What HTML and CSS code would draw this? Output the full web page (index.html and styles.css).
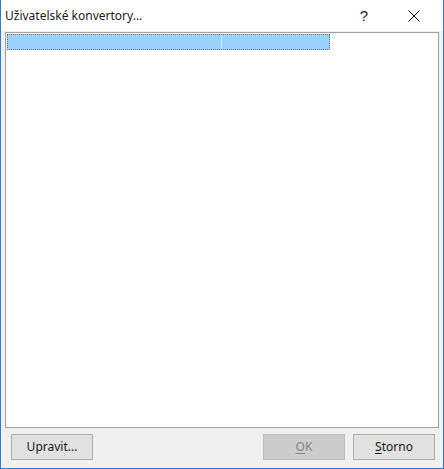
FILE: index.html
```html
<!DOCTYPE html>
<html>
<head>
<meta charset="utf-8">
<link rel="stylesheet" href="styles.css">
</head>
<body>
<div class="window">
  <div class="titlebar">
    <div class="title">Uživatelské konvertory...</div>
    <div class="tb-btn help">?</div>
    <div class="tb-btn close">
      <svg width="12" height="12" viewBox="0 0 12 12"><path d="M0.5 0.5 L11.5 11.5 M11.5 0.5 L0.5 11.5" stroke="#000" stroke-width="1" fill="none"/></svg>
    </div>
  </div>
  <div class="content">
    <div class="listbox">
      <div class="row">
        <div class="cell c1"></div>
        <div class="cell c2"></div>
      </div>
    </div>
    <div class="buttons">
      <button class="btn">Upravit...</button>
      <div class="spacer"></div>
      <button class="btn disabled"><u>O</u>K</button>
      <button class="btn"><u>S</u>torno</button>
    </div>
  </div>
</div>
</body>
</html>
```

FILE: styles.css
```css
html, body {
  margin: 0;
  padding: 0;
}
body {
  font-family: "Noto Sans", "Open Sans", sans-serif;
  font-size: 12px;
}
.window {
  width: 444px;
  height: 469px;
  box-sizing: border-box;
  border: 1px solid #2b7bd4;
  border-top: none;
  background: #f0f0f0;
  display: flex;
  flex-direction: column;
}
.titlebar {
  height: 31px;
  background: #ffffff;
  display: flex;
  align-items: center;
}
.title {
  flex: 1;
  padding-left: 4px;
  font-size: 12px;
  color: #1a1a1a;
  padding-bottom: 1px;
}
.tb-btn {
  display: flex;
  align-items: center;
  justify-content: center;
  height: 30px;
}
.help {
  width: 30px;
  font-family: "Liberation Sans", sans-serif;
  font-size: 15px;
  color: #222;
  margin-right: 12px;
  padding-bottom: 1px;
  box-sizing: border-box;
}
.close {
  width: 46px;
  margin-right: 6px;
}
.content {
  flex: 1;
  display: flex;
  flex-direction: column;
  padding: 1px 4px 0 4px;
}
.listbox {
  height: 396px;
  box-sizing: border-box;
  border: 1px solid #a0a0a0;
  background: #fff;
  padding: 1px;
}
.row {
  width: 323px;
  height: 16px;
  box-sizing: border-box;
  background: #99d1ff;
  border: 1px dotted #6b6b6b;
  display: flex;
}
.cell {
  height: 100%;
}
.c1 {
  width: 213px;
  border-right: 1px solid #cce8ff;
}
.c2 {
  flex: 1;
}
.buttons {
  display: flex;
  margin-top: 6px;
  padding: 0 4px 0 6px;
  gap: 8px;
}
.spacer {
  flex: 1;
}
.btn {
  width: 82px;
  height: 26px;
  box-sizing: border-box;
  background: #e1e1e1;
  border: 1px solid #adadad;
  font-family: "Noto Sans", "Open Sans", sans-serif;
  font-size: 12px;
  color: #1a1a1a;
  padding: 0 0 2px 0;
  margin: 0;
}
.btn.disabled {
  background: #cccccc;
  border-color: #bfbfbf;
  color: #838383;
}
.btn u {
  text-decoration-thickness: 1px;
  text-underline-offset: 2px;
}
```
